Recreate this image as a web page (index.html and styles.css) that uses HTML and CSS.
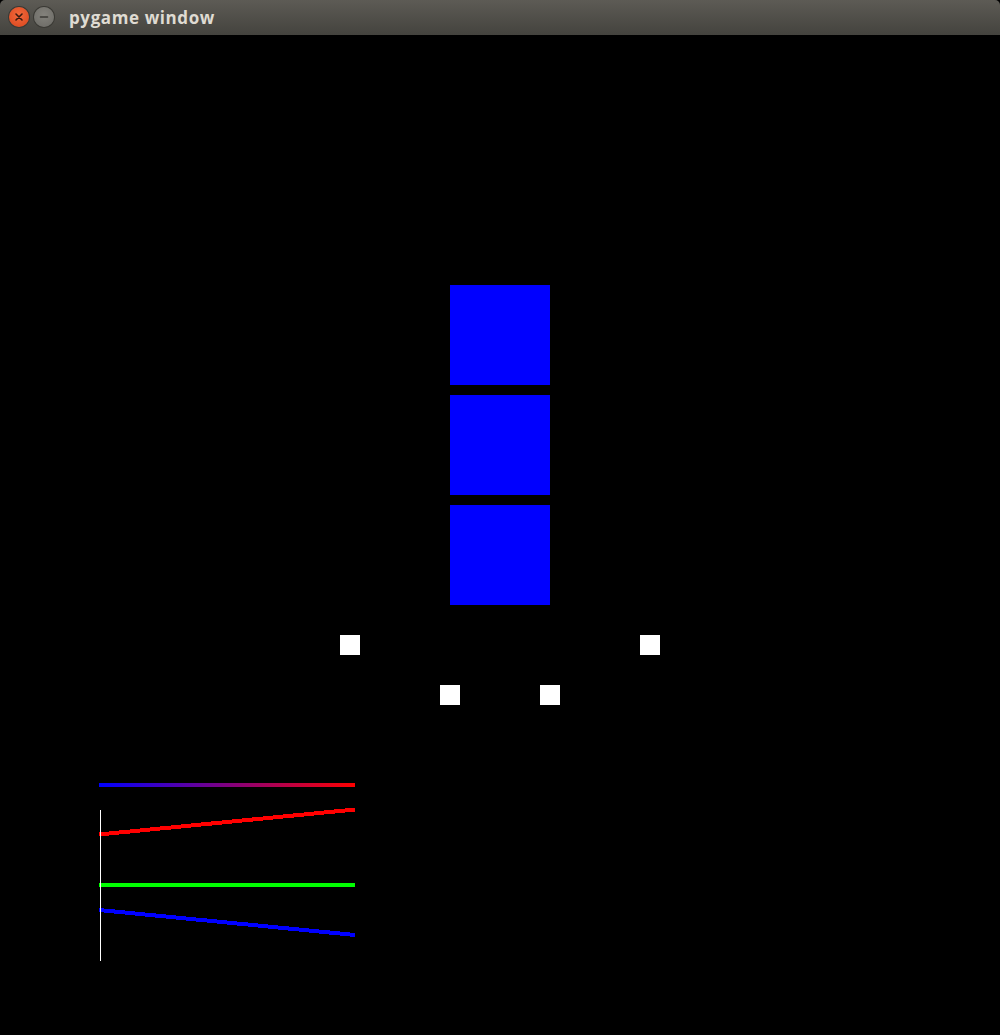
FILE: index.html
```html
<!DOCTYPE html>
<html>
<head>
<meta charset="utf-8">
<link rel="stylesheet" href="styles.css">
</head>
<body>
<div class="window">
  <div class="titlebar">
    <div class="buttons">
      <span class="btn close">
        <svg width="20" height="20" viewBox="0 0 20 20"><path d="M7 7 L13 13 M13 7 L7 13" stroke="#3a1a10" stroke-width="1.6" stroke-linecap="round"/></svg>
      </span>
      <span class="btn min">
        <svg width="20" height="20" viewBox="0 0 20 20"><path d="M6.5 10 H13.5" stroke="#3b3a36" stroke-width="1.6" stroke-linecap="round"/></svg>
      </span>
    </div>
    <span class="title">pygame window</span>
  </div>
  <svg class="canvas" width="1000" height="1000" viewBox="0 0 1000 1000" shape-rendering="crispEdges">
    <defs>
      <linearGradient id="br" x1="0" x2="1" y1="0" y2="0">
        <stop offset="0" stop-color="#0000ff"/>
        <stop offset="1" stop-color="#ff0000"/>
      </linearGradient>
    </defs>
    <rect x="450" y="250" width="100" height="100" fill="#0000ff"/>
    <rect x="450" y="360" width="100" height="100" fill="#0000ff"/>
    <rect x="450" y="470" width="100" height="100" fill="#0000ff"/>
    <rect x="340" y="600" width="20" height="20" fill="#ffffff"/>
    <rect x="640" y="600" width="20" height="20" fill="#ffffff"/>
    <rect x="440" y="650" width="20" height="20" fill="#ffffff"/>
    <rect x="540" y="650" width="20" height="20" fill="#ffffff"/>
    <rect x="99" y="748" width="256" height="4" fill="url(#br)"/>
    <line x1="99" y1="799.5" x2="355" y2="774.5" stroke="#ff0000" stroke-width="4"/>
    <rect x="99" y="848" width="256" height="4" fill="#00ff00"/>
    <line x1="99" y1="875" x2="355" y2="900" stroke="#0000ff" stroke-width="4"/>
    <rect x="100" y="775" width="1" height="151" fill="#ffffff"/>
  </svg>
</div>
</body>
</html>
```
FILE: styles.css
```css
html, body {
  margin: 0;
  padding: 0;
  background: #000;
}
.window {
  width: 1000px;
  display: flex;
  flex-direction: column;
}
.titlebar {
  height: 35px;
  box-sizing: border-box;
  background: linear-gradient(#5d5b55, #44433e);
  border-radius: 5px 5px 0 0;
  display: flex;
  align-items: center;
  padding-left: 9px;
}
.buttons {
  display: flex;
  gap: 5px;
  margin-top: -1px;
}
.btn {
  width: 20px;
  height: 20px;
  border-radius: 50%;
  display: block;
}
.btn svg { display: block; }
.close {
  background: radial-gradient(circle at 50% 40%, #f26a3c, #d9441c);
  box-shadow: 0 0 0 1px #3a3934;
}
.min {
  background: radial-gradient(circle at 50% 40%, #84827c, #6a6964);
  box-shadow: 0 0 0 1px #3a3934;
}
.title {
  margin-left: 15px;
  margin-top: 0;
  color: #dfdbd2;
  font-family: "Open Sans", "DejaVu Sans", sans-serif;
  font-weight: bold;
  font-size: 17px;
  letter-spacing: 0.6px;
}
.canvas {
  display: block;
  background: #000;
}
```
